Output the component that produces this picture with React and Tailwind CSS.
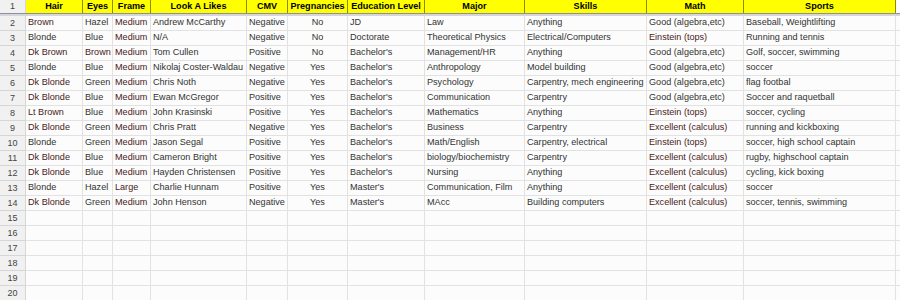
import React from "react";

const columns = [
  { name: "Hair" },
  { name: "Eyes" },
  { name: "Frame" },
  { name: "Look A Likes" },
  { name: "CMV" },
  { name: "Pregnancies", center: true },
  { name: "Education Level" },
  { name: "Major" },
  { name: "Skills" },
  { name: "Math" },
  { name: "Sports" },
];

const rows = [
  ["Brown", "Hazel", "Medium", "Andrew McCarthy", "Negative", "No", "JD", "Law", "Anything", "Good (algebra,etc)", "Baseball, Weightlifting"],
  ["Blonde", "Blue", "Medium", "N/A", "Negative", "No", "Doctorate", "Theoretical Physics", "Electrical/Computers", "Einstein (tops)", "Running and tennis"],
  ["Dk Brown", "Brown", "Medium", "Tom Cullen", "Positive", "No", "Bachelor's", "Management/HR", "Anything", "Good (algebra,etc)", "Golf, soccer, swimming"],
  ["Blonde", "Blue", "Medium", "Nikolaj Coster-Waldau", "Negative", "Yes", "Bachelor's", "Anthropology", "Model building", "Good (algebra,etc)", "soccer"],
  ["Dk Blonde", "Green", "Medium", "Chris Noth", "Negative", "Yes", "Bachelor's", "Psychology", "Carpentry, mech engineering", "Good (algebra,etc)", "flag footbal"],
  ["Dk Blonde", "Blue", "Medium", "Ewan McGregor", "Positive", "Yes", "Bachelor's", "Communication", "Carpentry", "Good (algebra,etc)", "Soccer and raquetball"],
  ["Lt Brown", "Blue", "Medium", "John Krasinski", "Positive", "Yes", "Bachelor's", "Mathematics", "Anything", "Einstein (tops)", "soccer, cycling"],
  ["Dk Blonde", "Green", "Medium", "Chris Pratt", "Negative", "Yes", "Bachelor's", "Business", "Carpentry", "Excellent (calculus)", "running and kickboxing"],
  ["Blonde", "Green", "Medium", "Jason Segal", "Positive", "Yes", "Bachelor's", "Math/English", "Carpentry, electrical", "Einstein (tops)", "soccer, high school captain"],
  ["Dk Blonde", "Blue", "Medium", "Cameron Bright", "Positive", "Yes", "Bachelor's", "biology/biochemistry", "Carpentry", "Excellent (calculus)", "rugby, highschool captain"],
  ["Dk Blonde", "Blue", "Medium", "Hayden Christensen", "Positive", "Yes", "Bachelor's", "Nursing", "Anything", "Excellent (calculus)", "cycling, kick boxing"],
  ["Blonde", "Hazel", "Large", "Charlie Hunnam", "Positive", "Yes", "Master's", "Communication, Film", "Anything", "Excellent (calculus)", "soccer"],
  ["Dk Blonde", "Green", "Medium", "John Henson", "Negative", "Yes", "Master's", "MAcc", "Building computers", "Excellent (calculus)", "soccer, tennis, swimming"],
];

// the reddish cells in the screenshot
const isWarm = (col, value) => {
  if (col === 0) return value.startsWith("Dk") || value === "Brown" || value === "Lt Brown";
  if (col === 1) return value === "Brown";
  if (col === 2) return true;
  if (col === 9) return value.startsWith("Einstein") || value.startsWith("Excellent");
  return false;
};

const emptyRows = [15, 16, 17, 18, 19, 20];

const gridCols =
  "grid grid-cols-[26px_57px_30px_38px_96px_41px_60px_77px_100px_122px_97px_152px_1fr]";

const RowNum = ({ n }) => (
  <div className="h-[15px] bg-[#f1f1f1] border-r border-b border-[#d6d6d6] flex items-center justify-center text-[9px] text-[#444]">
    {n}
  </div>
);

const App = () => {
  return (
    <div
      className="w-[900px] h-[300px] overflow-hidden bg-[#fbfcfb] text-[9.1px] leading-none"
      style={{ fontFamily: '"Liberation Sans", Arial, sans-serif' }}
    >
      {/* Header row */}
      <div className={gridCols}>
        <div className="h-[13px] bg-[#f1f1f1] border-r border-[#d6d6d6] flex items-center justify-center text-[9px] text-[#444]">
          1
        </div>
        {columns.map((c) => (
          <div
            key={c.name}
            className="h-[13px] bg-[#ffff00] border-r border-[#8c8c00] flex items-center justify-center font-bold text-black whitespace-nowrap overflow-hidden"
          >
            {c.name}
          </div>
        ))}
        <div className="h-[13px] bg-white" />
      </div>

      {/* frozen row divider */}
      <div className="h-[3px] border-t border-[#8f8f95] bg-[#d4d5de]" />

      {/* Data rows */}
      {rows.map((r, i) => (
        <div key={i} className={gridCols}>
          <RowNum n={i + 2} />
          {r.map((v, j) => (
            <div
              key={j}
              className={`h-[15px] border-r border-b border-[#e2e2e2] flex items-center whitespace-nowrap overflow-hidden ${
                columns[j].center ? "justify-center" : "pl-[2px]"
              } ${isWarm(j, v) ? "text-[#4a2222]" : "text-[#333]"}`}
            >
              {v}
            </div>
          ))}
          <div className="h-[15px] border-b border-[#e2e2e2]" />
        </div>
      ))}

      {emptyRows.map((n) => (
        <div key={n} className={gridCols}>
          <RowNum n={n} />
          {columns.map((c) => (
            <div key={c.name} className="h-[15px] border-r border-b border-[#e2e2e2]" />
          ))}
          <div className="h-[15px] border-b border-[#e2e2e2]" />
        </div>
      ))}
    </div>
  );
};

export default App;
